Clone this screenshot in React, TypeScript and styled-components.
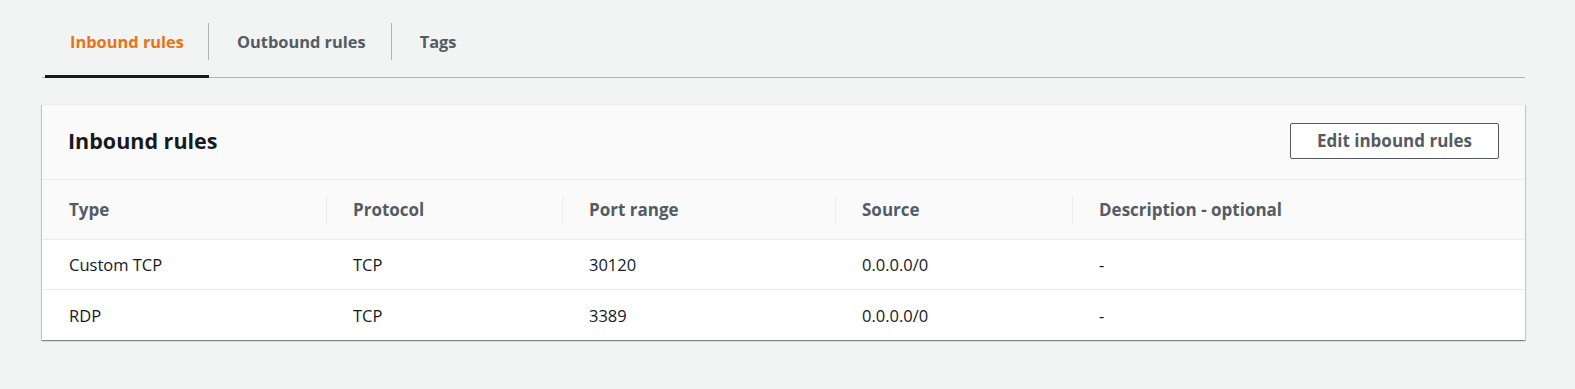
import React, { useState } from "react";
import styled, { createGlobalStyle } from "styled-components";

const GlobalStyle = createGlobalStyle`
  html, body {
    margin: 0;
    padding: 0;
    background: #f2f3f3;
  }
  body {
    font-family: "Open Sans", "Liberation Sans", sans-serif;
    color: #16191f;
    -webkit-font-smoothing: antialiased;
  }
  * { box-sizing: border-box; }
`;

const Page = styled.div`
  padding: 14px 50px 40px 42px;
`;

const TabList = styled.div`
  display: flex;
  padding-left: 3px;
  border-bottom: 1px solid #aab7b8;
`;

const Tab = styled.button<{ $active?: boolean }>`
  position: relative;
  display: flex;
  background: none;
  border: none;
  margin: 0;
  padding: 9px 0 17px;
  cursor: pointer;
  font-family: inherit;
  font-size: 16.4px;
  font-weight: 700;
  color: ${(p) => (p.$active ? "#ec7211" : "#545b64")};

  &::after {
    content: "";
    position: absolute;
    left: 0;
    right: 0;
    bottom: -1px;
    height: 3px;
    background: ${(p) => (p.$active ? "#16191f" : "transparent")};
  }
`;

const TabLabel = styled.span<{ $first?: boolean; $last?: boolean }>`
  display: flex;
  align-items: center;
  height: 37px;
  padding: ${(p) => (p.$first ? "0 24px 1px 25px" : "0 25px 1px 28px")};
  border-right: 1px solid ${(p) => (p.$last ? "transparent" : "#aab7b8")};
  white-space: nowrap;
`;

const Card = styled.section`
  margin-top: 26px;
  background: #ffffff;
  box-shadow: 0 1px 1px 0 rgba(0, 28, 36, 0.3),
    1px 1px 1px 0 rgba(0, 28, 36, 0.15), -1px 1px 1px 0 rgba(0, 28, 36, 0.15);
  border-top: 1px solid #eaeded;
`;

const CardHeader = styled.header`
  display: flex;
  align-items: center;
  justify-content: space-between;
  height: 75px;
  padding: 0 26px 3px;
  background: #fafafa;
  border-bottom: 1px solid #eaeded;
`;

const Title = styled.h2`
  margin: 0;
  font-size: 21.5px;
  font-weight: 700;
  color: #16191f;
`;

const Button = styled.button`
  height: 36px;
  padding: 0 26px;
  background: #ffffff;
  border: 1px solid #545b64;
  border-radius: 2px;
  font-family: inherit;
  font-size: 17px;
  font-weight: 700;
  color: #545b64;
  cursor: pointer;
`;

const Grid = styled.div`
  display: grid;
  grid-template-columns: 284px 236px 273px 237px 1fr;
`;

const HeadCell = styled.div<{ $divider?: boolean }>`
  position: relative;
  display: flex;
  align-items: center;
  height: 60px;
  padding-left: 27px;
  padding-bottom: 1px;
  background: #fafafa;
  border-bottom: 1px solid #eaeded;
  font-size: 17px;
  font-weight: 700;
  color: #545b64;
  white-space: nowrap;

  &::before {
    content: "";
    display: ${(p) => (p.$divider ? "block" : "none")};
    position: absolute;
    left: 0;
    top: 16px;
    height: 28px;
    width: 1px;
    background: #eaeded;
  }
`;

const Cell = styled.div<{ $last?: boolean }>`
  display: flex;
  align-items: center;
  height: 50px;
  padding-left: 27px;
  border-bottom: ${(p) => (p.$last ? "none" : "1px solid #eaeded")};
  font-size: 16.5px;
  color: #16191f;
  white-space: nowrap;
`;

const columns = ["Type", "Protocol", "Port range", "Source", "Description - optional"];

const rows = [
  ["Custom TCP", "TCP", "30120", "0.0.0.0/0", "-"],
  ["RDP", "TCP", "3389", "0.0.0.0/0", "-"],
];

const tabs = ["Inbound rules", "Outbound rules", "Tags"];

export default function App() {
  const [active, setActive] = useState(0);
  return (
    <>
      <GlobalStyle />
      <Page>
        <TabList>
          {tabs.map((t, i) => (
            <Tab key={t} $active={i === active} onClick={() => setActive(i)}>
              <TabLabel $first={i === 0} $last={i === tabs.length - 1}>
                {t}
              </TabLabel>
            </Tab>
          ))}
        </TabList>
        <Card>
          <CardHeader>
            <Title>Inbound rules</Title>
            <Button>Edit inbound rules</Button>
          </CardHeader>
          <Grid>
            {columns.map((c, i) => (
              <HeadCell key={c} $divider={i > 0}>
                {c}
              </HeadCell>
            ))}
            {rows.map((r, ri) =>
              r.map((v, ci) => (
                <Cell key={`${ri}-${ci}`} $last={ri === rows.length - 1}>
                  {v}
                </Cell>
              ))
            )}
          </Grid>
        </Card>
      </Page>
    </>
  );
}
